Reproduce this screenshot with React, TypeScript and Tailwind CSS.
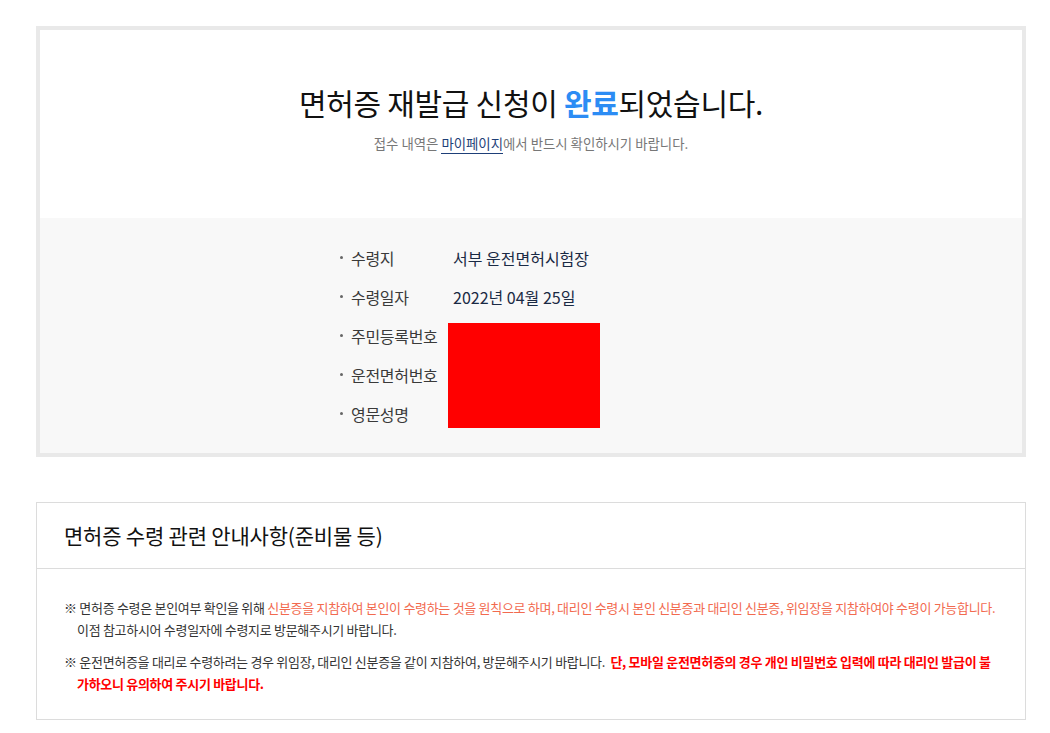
import React from 'react';

const font = { fontFamily: '"Noto Sans CJK KR", "Noto Sans", sans-serif' };

const rows = [
  { label: '수령지', value: '서부 운전면허시험장' },
  { label: '수령일자', value: '2022년 04월 25일' },
  { label: '주민등록번호', value: '' },
  { label: '운전면허번호', value: '' },
  { label: '영문성명', value: '' },
];

function Bullet() {
  return <span className="mr-[8px] inline-block h-[3px] w-[3px] shrink-0 rounded-full bg-[#666]" />;
}

export default function App() {
  return (
    <div className="min-h-[733px] bg-white pt-[26px]" style={font}>
      {/* completion box */}
      <div className="ml-[36px] w-[990px] border-[4px] border-[#e9e9e9]">
        <div className="flex h-[188px] flex-col items-center bg-white pt-[52px]">
          <h1 className="text-[30px] leading-[40px] tracking-[-0.3px] text-[#111]">
            면허증 재발급 신청이 <span className="font-bold text-[#2c8cf4]">완료</span>되었습니다.
          </h1>
          <p className="mt-[11px] text-[13.4px] leading-[20px] text-[#777]">
            접수 내역은{' '}
            <span className="border-b border-[#1e3f78] text-[#1e3f78]">마이페이지</span>에서 반드시 확인하시기
            바랍니다.
          </p>
        </div>
        <div className="bg-[#f8f8f8] pb-[20px] pl-[300px] pt-[20px]">
          <div className="grid grid-cols-[113px_auto] grid-rows-[repeat(5,39px)]">
            {rows.map((r, i) => (
              <React.Fragment key={r.label}>
                <div
                  className="col-start-1 flex items-center text-[16px] tracking-[-0.3px] text-[#3a3a3a]"
                  style={{ gridRow: i + 1 }}
                >
                  <Bullet />
                  {r.label}
                </div>
                {r.value && (
                  <div
                    className="col-start-2 flex items-center text-[16px] text-[#1a2a44]"
                    style={{ gridRow: i + 1 }}
                  >
                    {r.value}
                  </div>
                )}
              </React.Fragment>
            ))}
            <div className="col-start-2 row-span-3 row-start-3 -ml-[5px] mt-[7px] h-[105px] w-[152px] bg-[#ff0000]" />
          </div>
        </div>
      </div>

      {/* notice box */}
      <div className="ml-[36px] mt-[45px] w-[990px] border border-[#dcdcdc]">
        <div className="flex h-[66px] items-center border-b border-[#dcdcdc] pl-[27px]">
          <h2 className="text-[21px] tracking-[-0.2px] text-[#111]">면허증 수령 관련 안내사항(준비물 등)</h2>
        </div>
        <div className="pb-[24px] pl-[27px] pr-[28px] pt-[28px] text-[13px] leading-[22px] tracking-[-0.3px] text-[#333]">
          <p className="pl-[13px] -indent-[13px]">
            ※ 면허증 수령은 본인여부 확인을 위해{' '}
            <span className="text-[#f26a4f]">
              신분증을 지참하여 본인이 수령하는 것을 원칙으로 하며, 대리인 수령시 본인 신분증과 대리인 신분증, 위임장을
              지참하여야 수령이 가능합니다.
            </span>{' '}
            이점 참고하시어 수령일자에 수령지로 방문해주시기 바랍니다.
          </p>
          <p className="mt-[10px] pl-[13px] -indent-[13px]">
            ※ 운전면허증을 대리로 수령하려는 경우 위임장, 대리인 신분증을 같이 지참하여, 방문해주시기 바랍니다.{' '}
            <span className="font-bold text-[#ff0000]">
              &nbsp;단, 모바일 운전면허증의 경우 개인 비밀번호 입력에 따라 대리인 발급이 불가하오니 유의하여 주시기
              바랍니다.
            </span>
          </p>
        </div>
      </div>
    </div>
  );
}
